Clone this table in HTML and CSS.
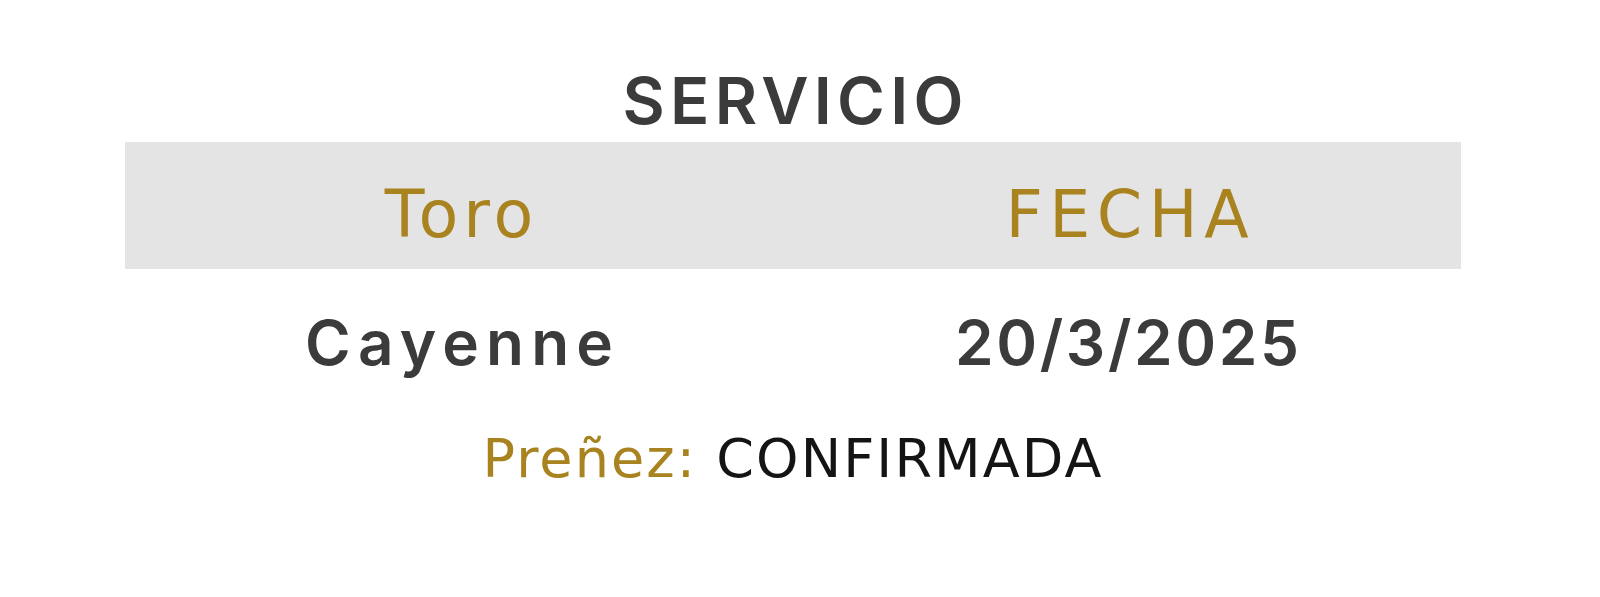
FILE: index.html
```html
<!DOCTYPE html>
<html lang="es">
<head>
<meta charset="utf-8">
<title>Servicio</title>
<link rel="stylesheet" href="styles.css">
</head>
<body>
<main class="card">
  <h1 class="title">SERVICIO</h1>
  <div class="band">
    <div class="col head-toro">Toro</div>
    <div class="col head-fecha">FECHA</div>
  </div>
  <div class="values">
    <div class="col val-name">Cayenne</div>
    <div class="col val-date">20/3/2025</div>
  </div>
  <p class="status"><span class="label">Preñez:</span> <span class="state">CONFIRMADA</span></p>
</main>
</body>
</html>
```
FILE: styles.css
```css
html, body {
  margin: 0;
  padding: 0;
  background: #ffffff;
}
body {
  font-family: "DejaVu Sans", "Open Sans", sans-serif;
  width: 1600px;
  height: 597px;
  overflow: hidden;
}
.card {
  margin-left: 125px;
  width: 1336px;
  padding-top: 61px;
  display: flex;
  flex-direction: column;
  align-items: stretch;
}
.title {
  margin: 0;
  font-family: "Inter", "Open Sans", sans-serif;
  font-size: 65px;
  font-weight: 600;
  line-height: 80px;
  color: #3b3b3b;
  text-align: center;
  letter-spacing: 5.3px;
  text-indent: 5.3px;
}
.band {
  margin-top: 1px;
  background: #e4e4e4;
  display: grid;
  grid-template-columns: 1fr 1fr;
  padding: 23px 0 4px;
  font-size: 65px;
  line-height: 100px;
  color: #a8831f;
  text-align: center;
}
.head-toro { letter-spacing: 5px; text-indent: 5px; }
.head-fecha { letter-spacing: 6.5px; text-indent: 6.5px; }
.values {
  margin-top: 34px;
  display: grid;
  grid-template-columns: 1fr 1fr;
  font-family: "Inter", "Open Sans", sans-serif;
  font-size: 62px;
  font-weight: 600;
  line-height: 80px;
  color: #3b3b3b;
  text-align: center;
}
.val-name { letter-spacing: 7.2px; text-indent: 7.2px; }
.val-date { letter-spacing: 2.6px; text-indent: 2.6px; }
.status {
  margin: 41px 0 0;
  font-size: 54px;
  line-height: 70px;
  text-align: center;
  letter-spacing: 2.1px;
}
.label { color: #a8831f; }
.state { color: #141414; }
```
